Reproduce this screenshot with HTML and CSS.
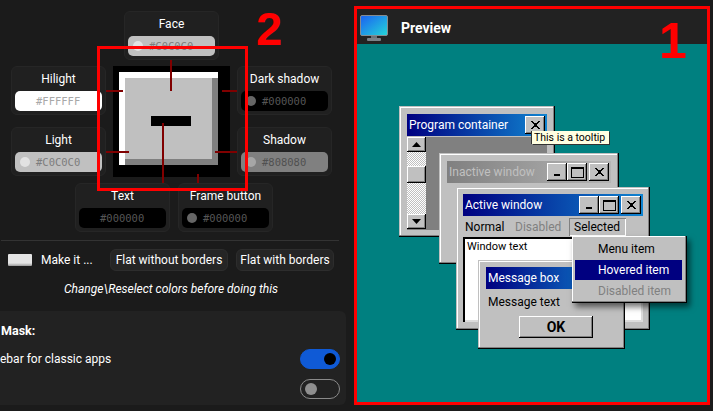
FILE: index.html
```html
<!DOCTYPE html>
<html lang="en">
<head>
    <meta charset="UTF-8">
    <meta name="viewport" content="width=device-width, initial-scale=1.0">
    <title>Classic colors preview</title>
    <link rel="stylesheet" href="styles.css">
</head>
<body>
    <svg class="defs" width="0" height="0">
        <symbol id="ic-close" viewBox="0 0 9 8"><path d="M0 0h2v1h1v1h3V1h1V0h2v1H8v1H7v1H6v2h1v1h1v1h1v1H7V7H6V6H3v1H2v1H0V7h1V6h1V5h1V3H2V2H1V1H0z"/></symbol>
        <symbol id="ic-min" viewBox="0 0 9 8"><path d="M1 6h6v2H1z"/></symbol>
        <symbol id="ic-max" viewBox="0 0 13 11"><path d="M0 0h13v11H0zM1 2v8h11V2z" fill-rule="evenodd"/></symbol>
        <symbol id="ic-up" viewBox="0 0 9 5"><path d="M4.5 0 9 5H0z"/></symbol>
        <symbol id="ic-down" viewBox="0 0 9 5"><path d="M0 0h9L4.5 5z"/></symbol>
    </svg>

    <div class="settings">
        <div class="palette">
            <div class="color-card card-face">
                <span>Face</span>
                <div class="color-input in-face"><i class="dot"></i>#C0C0C0</div>
            </div>
            <div class="color-card card-hilight">
                <span>Hilight</span>
                <div class="color-input in-hilight"><i class="dot"></i>#FFFFFF</div>
            </div>
            <div class="button-map">
                <div class="map-hilight">
                    <div class="map-shadow">
                        <div class="map-face"></div>
                    </div>
                </div>
                <div class="map-text"></div>
                <b class="wire wire-face"></b>
                <b class="wire wire-hilight"></b>
                <b class="wire wire-dark"></b>
                <b class="wire wire-light"></b>
                <b class="wire wire-shadow"></b>
                <b class="wire wire-label"></b>
                <b class="wire wire-frame"></b>
            </div>
            <div class="color-card card-dark">
                <span>Dark shadow</span>
                <div class="color-input in-black"><i class="dot"></i>#000000</div>
            </div>
            <div class="color-card card-light">
                <span>Light</span>
                <div class="color-input in-light"><i class="dot"></i>#C0C0C0</div>
            </div>
            <div class="color-card card-shadow">
                <span>Shadow</span>
                <div class="color-input in-shadow"><i class="dot"></i>#808080</div>
            </div>
        </div>

        <div class="palette-bottom">
            <div class="color-card">
                <span>Text</span>
                <div class="color-input in-black"><i class="dot dot-hidden"></i>#000000</div>
            </div>
            <div class="color-card">
                <span>Frame button</span>
                <div class="color-input in-black"><i class="dot"></i>#000000</div>
            </div>
        </div>

        <div class="divider"></div>

        <div class="flat-row">
            <div class="swatch"></div>
            <span class="make-label">Make it ...</span>
            <button class="flat-btn btn-without">Flat without borders</button>
            <button class="flat-btn">Flat with borders</button>
        </div>

        <p class="note">Change\Reselect colors before doing this</p>

        <div class="mask-card">
            <h4>Mask:</h4>
            <div class="mask-row">
                <span>ebar for classic apps</span>
                <div class="toggle toggle-on"></div>
            </div>
            <div class="mask-row">
                <span></span>
                <div class="toggle"></div>
            </div>
        </div>

        <div class="mark-box"></div>
        <div class="mark-num mark-two">2</div>
    </div>

    <div class="preview">
        <div class="preview-head">
            <svg class="monitor" width="28" height="26" viewBox="0 0 28 26">
                <defs>
                    <linearGradient id="screen" x1="0" y1="0" x2="1" y2="1">
                        <stop offset="0" stop-color="#1a60f2"/>
                        <stop offset="1" stop-color="#24d6d8"/>
                    </linearGradient>
                </defs>
                <rect x="0.5" y="0.5" width="27" height="20" rx="1.5" fill="url(#screen)" stroke="#858b90"/>
                <rect x="11" y="21" width="6" height="2" fill="#6c7379"/>
                <rect x="7" y="23" width="14" height="3" rx="1" fill="#7b8288"/>
            </svg>
            <span>Preview</span>
        </div>

        <div class="desktop">
            <div class="win win-program">
                <div class="titlebar">
                    <span>Program container</span>
                    <div class="caption-btns">
                        <div class="cap-btn"><svg width="9" height="8"><use href="#ic-close"/></svg></div>
                    </div>
                </div>
                <div class="program-body">
                    <div class="scrollbar">
                        <div class="scroll-btn"><svg width="9" height="5"><use href="#ic-up"/></svg></div>
                        <div class="scroll-track track-a"></div>
                        <div class="scroll-btn scroll-thumb"></div>
                        <div class="scroll-track track-b"></div>
                        <div class="scroll-btn"><svg width="9" height="5"><use href="#ic-down"/></svg></div>
                    </div>
                </div>
            </div>

            <div class="win win-inactive">
                <div class="titlebar titlebar-off">
                    <span>Inactive window</span>
                    <div class="caption-btns">
                        <div class="cap-btn"><svg width="9" height="8"><use href="#ic-min"/></svg></div>
                        <div class="cap-btn"><svg width="13" height="11"><use href="#ic-max"/></svg></div>
                        <div class="cap-btn cap-close"><svg width="9" height="8"><use href="#ic-close"/></svg></div>
                    </div>
                </div>
            </div>

            <div class="win win-active">
                <div class="titlebar">
                    <span>Active window</span>
                    <div class="caption-btns">
                        <div class="cap-btn"><svg width="9" height="8"><use href="#ic-min"/></svg></div>
                        <div class="cap-btn"><svg width="13" height="11"><use href="#ic-max"/></svg></div>
                        <div class="cap-btn cap-close"><svg width="9" height="8"><use href="#ic-close"/></svg></div>
                    </div>
                </div>
                <div class="menubar">
                    <span class="menu-normal">Normal</span>
                    <span class="menu-disabled">Disabled</span>
                    <span class="menu-selected">Selected</span>
                </div>
                <div class="window-text">Window text</div>
            </div>

            <div class="win win-msg">
                <div class="titlebar titlebar-msg"><span>Message box</span></div>
                <p class="msg-text">Message text</p>
                <div class="ok-btn">OK</div>
            </div>

            <div class="win win-menu">
                <div class="menu-item">Menu item</div>
                <div class="menu-item menu-hover">Hovered item</div>
                <div class="menu-item menu-off">Disabled item</div>
            </div>

            <div class="tooltip">This is a tooltip</div>
        </div>

        <div class="mark-num mark-one">1</div>
    </div>
</body>
</html>
```

FILE: styles.css
```css
* {
    box-sizing: border-box;
}
body {
    margin: 0;
    height: 411px;
    display: flex;
    overflow: hidden;
    background-color: #1b1b1b;
    color: #fff;
    font-family: Roboto, sans-serif;
    font-size: 12px;
}
.defs {
    position: absolute;
}

/* left side */
.settings {
    position: relative;
    flex: none;
    width: 354px;
    height: 411px;
    overflow: hidden;
}
.palette {
    display: grid;
    grid-template-columns: repeat(3, 95px);
    grid-template-rows: 49px 49px 55px;
    column-gap: 18px;
    row-gap: 6px;
    margin: 11px 0 0 11px;
}
.color-card {
    width: 95px;
    height: 49px;
    padding: 3px 4px 0;
    background: #202020;
    border: 1px solid #262626;
    border-radius: 6px;
    text-align: center;
    line-height: 18px;
}
.color-card span {
    display: block;
    height: 21px;
}
.card-face {
    grid-column: 2;
    grid-row: 1;
}
.card-hilight {
    grid-column: 1;
    grid-row: 2;
}
.card-dark {
    grid-column: 3;
    grid-row: 2;
}
.card-light {
    grid-column: 1;
    grid-row: 3;
    align-self: end;
}
.card-shadow {
    grid-column: 3;
    grid-row: 3;
    align-self: end;
}
.color-input {
    display: flex;
    align-items: center;
    gap: 6px;
    height: 20px;
    margin: 0 -1px;
    padding-left: 5px;
    border-radius: 5px;
    font-family: "DejaVu Sans Mono", monospace;
    font-size: 10.5px;
    color: #7d7d7d;
}
.dot {
    flex: none;
    width: 10px;
    height: 10px;
    border-radius: 50%;
    background: #e2e2e2;
}
.dot-hidden {
    background: transparent;
}
.in-face,
.in-light {
    background: #c0c0c0;
}
.in-hilight {
    background: #fff;
    color: #a8a8a8;
}
.in-hilight .dot {
    background: #fff;
}
.in-black {
    background: #000;
    color: #565656;
}
.in-black .dot {
    background: #666;
}
.in-black .dot-hidden {
    background: transparent;
}
.in-shadow {
    background: #808080;
    color: #505050;
}
.in-shadow .dot {
    background: #a6a6a6;
}

.button-map {
    position: relative;
    grid-column: 2;
    grid-row: 2 / 4;
    width: 117px;
    height: 111px;
    margin-left: -11px;
    padding: 6px;
    background: #000;
}
.map-hilight {
    width: 99px;
    height: 93px;
    padding: 6px 0 0 6px;
    background: #fff;
}
.map-shadow {
    width: 93px;
    height: 87px;
    background: #808080;
}
.map-face {
    width: 87px;
    height: 81px;
    background: #c0c0c0;
}
.map-text {
    position: absolute;
    left: 38px;
    top: 50px;
    width: 40px;
    height: 10px;
    background: #000;
}
.wire {
    position: absolute;
    background: #800000;
}
.wire-face {
    left: 57px;
    top: -6px;
    width: 2px;
    height: 31px;
}
.wire-hilight {
    left: -7px;
    top: 24px;
    width: 17px;
    height: 2px;
}
.wire-dark {
    left: 109px;
    top: 24px;
    width: 15px;
    height: 2px;
}
.wire-light {
    left: -7px;
    top: 85px;
    width: 23px;
    height: 2px;
}
.wire-shadow {
    left: 102px;
    top: 85px;
    width: 22px;
    height: 2px;
}
.wire-label {
    left: 49px;
    top: 57px;
    width: 2px;
    height: 60px;
}
.wire-frame {
    left: 84px;
    top: 108px;
    width: 2px;
    height: 9px;
}

.palette-bottom {
    display: flex;
    gap: 8px;
    margin: 7px 0 0 75px;
}
.divider {
    height: 1px;
    margin: 8px 15px 0 1px;
    background: #333;
}
.flat-row {
    display: flex;
    align-items: center;
    height: 22px;
    margin-top: 8px;
    padding-left: 8px;
}
.swatch {
    width: 24px;
    height: 12px;
    background: linear-gradient(#e4e4e4 75%, #999);
    border-radius: 1px;
}
.make-label {
    width: 69px;
    margin-left: 9px;
}
.flat-btn {
    height: 22px;
    padding: 0;
    width: 118px;
    margin-right: 8px;
    border: 1px solid #2d2d2d;
    border-radius: 6px;
    background: #252525;
    color: #fff;
    font-family: inherit;
    font-size: 12px;
}
.flat-btn:last-child {
    width: 98px;
    margin-right: 0;
}
.note {
    margin: 9px 0 0;
    width: 342px;
    text-align: center;
    font-style: italic;
    line-height: 18px;
}
.mask-card {
    width: 346px;
    height: 94px;
    margin-top: 13px;
    padding: 11px 6px 0 0;
    background: #222;
    border-radius: 0 6px 6px 0;
}
.mask-card h4 {
    margin: 0 0 9px 1px;
    font-size: 12.5px;
    line-height: 18px;
}
.mask-row {
    display: flex;
    align-items: center;
    justify-content: space-between;
    height: 20px;
    margin-bottom: 10px;
}
.toggle {
    position: relative;
    width: 40px;
    height: 20px;
    border: 1px solid #8a8a8a;
    border-radius: 10px;
}
.toggle::after {
    content: "";
    position: absolute;
    left: 4px;
    top: 3px;
    width: 12px;
    height: 12px;
    border-radius: 50%;
    background: #8f8f8f;
}
.toggle-on {
    background: #0f5ad6;
    border-color: #0f5ad6;
}
.toggle-on::after {
    left: 23px;
    background: #000;
}

/* red marks on top of the picture */
.mark-box {
    position: absolute;
    left: 97px;
    top: 46px;
    width: 151px;
    height: 145px;
    border: 3px solid #f00;
}
.mark-num {
    position: absolute;
    color: #f00;
    font-family: "Liberation Sans", sans-serif;
    font-weight: bold;
    line-height: 1;
}
.mark-two {
    left: 256px;
    top: 5px;
    font-size: 47px;
}
.mark-one {
    left: 302px;
    top: 7px;
    font-size: 50px;
}

/* preview */
.preview {
    position: relative;
    display: flex;
    flex-direction: column;
    flex: none;
    width: 356px;
    height: 399px;
    margin-top: 6px;
    border: 3px solid #f00;
}
.preview-head {
    display: flex;
    align-items: center;
    flex: none;
    gap: 13px;
    height: 35px;
    padding: 3px 0 0 3px;
    background: #222;
    font-size: 14px;
    font-weight: bold;
}
.desktop {
    position: relative;
    flex: 1;
    overflow: hidden;
    background: #008080;
    color: #000;
}

.win {
    position: absolute;
    padding: 8px 8px 0;
    background: #c0c0c0;
    box-shadow: inset -1px -1px #000, inset -2px -2px #808080, inset 1px 1px #c0c0c0, inset 2px 2px #fff;
}
.win-program {
    left: 42px;
    top: 62px;
    width: 156px;
    height: 131px;
}
.win-inactive {
    left: 82px;
    top: 109px;
    width: 180px;
    height: 111px;
}
.win-active {
    left: 99px;
    top: 143px;
    width: 194px;
    height: 143px;
    padding: 7px 7px 0;
}
.win-msg {
    left: 121px;
    top: 216px;
    width: 147px;
    height: 89px;
    padding-top: 7px;
}
.win-menu {
    left: 215px;
    top: 192px;
    width: 115px;
    height: 67px;
    padding: 3px 5px 0 3px;
    box-shadow: inset -1px -1px #000, inset -2px -2px #808080, inset 1px 1px #fff, 3px 4px 6px rgba(0, 0, 0, .55);
}
.titlebar {
    display: flex;
    align-items: center;
    justify-content: space-between;
    height: 22px;
    padding: 0 2px;
    background: linear-gradient(to right, #000080, #1084d0);
    color: #fff;
}
.titlebar-off {
    background: linear-gradient(to right, #808080, #b5b5b5);
    color: #c0c0c0;
}
.caption-btns {
    display: flex;
}
.cap-btn,
.scroll-btn,
.ok-btn {
    display: flex;
    align-items: center;
    justify-content: center;
    background: #c0c0c0;
    box-shadow: inset -1px -1px #000, inset 1px 1px #fff, inset -2px -2px #808080;
}
.cap-btn {
    width: 20px;
    height: 18px;
}
.cap-close {
    margin-left: 2px;
}
.program-body {
    height: 93px;
    margin-top: 1px;
    background: #808080;
}
.scrollbar {
    display: flex;
    flex-direction: column;
    width: 19px;
    height: 92px;
}
.scroll-btn {
    flex: none;
    height: 15px;
}
.scroll-thumb {
    height: 17px;
}
.scroll-track {
    background: repeating-conic-gradient(#c0c0c0 0 25%, #fff 0 50%) 0 0 / 2px 2px;
}
.track-a {
    height: 14px;
}
.track-b {
    height: 31px;
}
.menubar {
    display: flex;
    align-items: center;
    height: 19px;
    margin-top: 1px;
    line-height: 18px;
}
.menu-normal {
    margin-left: 2px;
    width: 50px;
}
.menu-disabled {
    width: 54px;
    color: #808080;
}
.menu-selected {
    width: 57px;
    height: 18px;
    padding-left: 5px;
    box-shadow: inset 1px 1px #808080, inset -1px -1px #fff;
}
.window-text {
    height: 85px;
    margin-top: 1px;
    padding: 1px 0 0 4px;
    background: #fff;
    box-shadow: inset 2px 2px #000, inset -2px -2px #dcdcdc;
    font-size: 11px;
    line-height: 18px;
}
.msg-text {
    margin: 4px 0 0 2px;
    line-height: 18px;
}
.ok-btn {
    width: 74px;
    height: 22px;
    margin: 5px 0 0 33px;
    font-weight: bold;
    font-size: 14px;
}
.menu-item {
    height: 20px;
    padding-left: 23px;
    line-height: 20px;
    margin-bottom: 1px;
}
.menu-hover {
    background: #000080;
    color: #fff;
}
.menu-off {
    color: #808080;
}
.tooltip {
    position: absolute;
    left: 175px;
    top: 87px;
    width: 77px;
    height: 13px;
    overflow: hidden;
    padding-left: 2px;
    background: #ffffe1;
    box-shadow: -1px 0 #333, 1px 1px #333;
    font-size: 10.5px;
    line-height: 13px;
    white-space: nowrap;
}
```
